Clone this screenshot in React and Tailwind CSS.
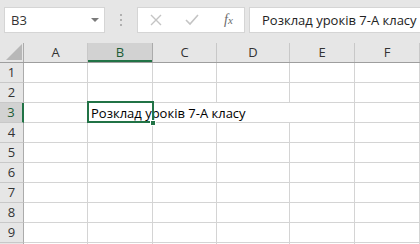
import React from "react";

const cols = [
  { l: "A", w: "w-[64px]" },
  { l: "B", w: "w-[65px]" },
  { l: "C", w: "w-[64px]" },
  { l: "D", w: "w-[73px]" },
  { l: "E", w: "w-[65px]" },
  { l: "F", w: "w-[65px]" },
];

const font = { fontFamily: '"Open Sans", "Liberation Sans", sans-serif' };

export default function App() {
  const rows = [1, 2, 3, 4, 5, 6, 7, 8, 9, 10];
  return (
    <div className="w-[420px] h-[244px] overflow-hidden bg-[#e6e6e6] flex flex-col" style={font}>
      {/* toolbar */}
      <div className="h-[43px] shrink-0 flex items-start pt-[7px] pl-[4px]">
        <div className="w-[101px] h-[26px] bg-white border border-[#d5d5d5] flex items-center justify-between pl-[6px] pr-[5px]">
          <span className="text-[13px] text-[#333] leading-none">B3</span>
          <span className="w-0 h-0 border-l-[4px] border-r-[4px] border-t-[4px] border-l-transparent border-r-transparent border-t-[#7a7a7a]" />
        </div>
        <div className="w-[32px] h-[26px] flex flex-col items-center justify-center gap-[3px]">
          <span className="w-[2px] h-[2px] bg-[#b0b0b0]" />
          <span className="w-[2px] h-[2px] bg-[#b0b0b0]" />
          <span className="w-[2px] h-[2px] bg-[#b0b0b0]" />
        </div>
        <div className="w-[108px] h-[26px] bg-white border border-[#d5d5d5] flex items-center">
          <svg width="12" height="12" viewBox="0 0 12 12" className="ml-[12px]">
            <path d="M1 1 L11 11 M11 1 L1 11" stroke="#c4c4c4" strokeWidth="1.4" fill="none" />
          </svg>
          <svg width="14" height="12" viewBox="0 0 14 12" className="ml-[23px]">
            <path d="M1 6 L5 10 L13 1" stroke="#c4c4c4" strokeWidth="1.6" fill="none" />
          </svg>
          <span className="ml-[25px] text-[#6b6b6b] text-[14px] italic leading-none" style={{ fontFamily: '"Liberation Serif", serif' }}>
            f<span className="text-[11px]">x</span>
          </span>
        </div>
        <div className="ml-[4px] flex-1 h-[26px] bg-white border border-[#d5d5d5] border-r-0 flex items-center pl-[12px] overflow-hidden">
          <span className="text-[13px] text-[#222] whitespace-nowrap leading-none">Розклад уроків 7-А класу</span>
        </div>
      </div>

      {/* column headers */}
      <div className="h-[20px] shrink-0 flex border-b border-[#9e9e9e]">
        <div className="w-[24px] shrink-0 border-r border-[#ababab] flex items-end justify-end pr-[1px] pb-[2px]">
          <svg width="16" height="16" viewBox="0 0 16 16">
            <path d="M16 0 L16 16 L0 16 Z" fill="#b8b8b8" />
          </svg>
        </div>
        {cols.map((c) => (
          <div
            key={c.l}
            className={`${c.w} shrink-0 flex items-center justify-center text-[13px] ${
              c.l === "B"
                ? "bg-[#d2d2d2] text-[#1d5c35] border-r border-[#ababab] shadow-[inset_0_-2px_0_#217346]"
                : "text-[#333] border-r border-[#c8c8c8]"
            }`}
          >
            {c.l}
          </div>
        ))}
      </div>

      {/* rows */}
      <div className="flex-1 bg-white">
        {rows.map((r) => (
          <div key={r} className="h-[20px] flex">
            <div
              className={`w-[24px] shrink-0 flex items-center justify-center text-[13px] border-b border-[#c8c8c8] ${
                r === 3
                  ? "bg-[#d2d2d2] text-[#1d5c35] border-r-2 border-r-[#217346]"
                  : "bg-[#e6e6e6] text-[#333] border-r border-r-[#ababab]"
              }`}
            >
              {r}
            </div>
            {cols.map((c) => {
              const isSel = r === 3 && c.l === "B";
              const noRight = r === 3 && (c.l === "B" || c.l === "C" || c.l === "D");
              return (
                <div
                  key={c.l}
                  className={`${c.w} shrink-0 relative border-b border-[#d4d4d4] ${
                    noRight ? "" : "border-r border-r-[#d4d4d4]"
                  }`}
                >
                  {isSel && (
                    <>
                      <span className="absolute left-[3px] top-[1px] z-10 whitespace-nowrap text-[13px] text-black leading-[18px]">
                        Розклад уроків 7-А класу
                      </span>
                      <div className="absolute left-[-1px] top-[-2px] w-[67px] h-[22px] border-2 border-[#217346] z-20" />
                      <div className="absolute left-[62px] top-[17px] w-[6px] h-[6px] bg-[#217346] border border-white z-30" />
                    </>
                  )}
                </div>
              );
            })}
          </div>
        ))}
      </div>
    </div>
  );
}
